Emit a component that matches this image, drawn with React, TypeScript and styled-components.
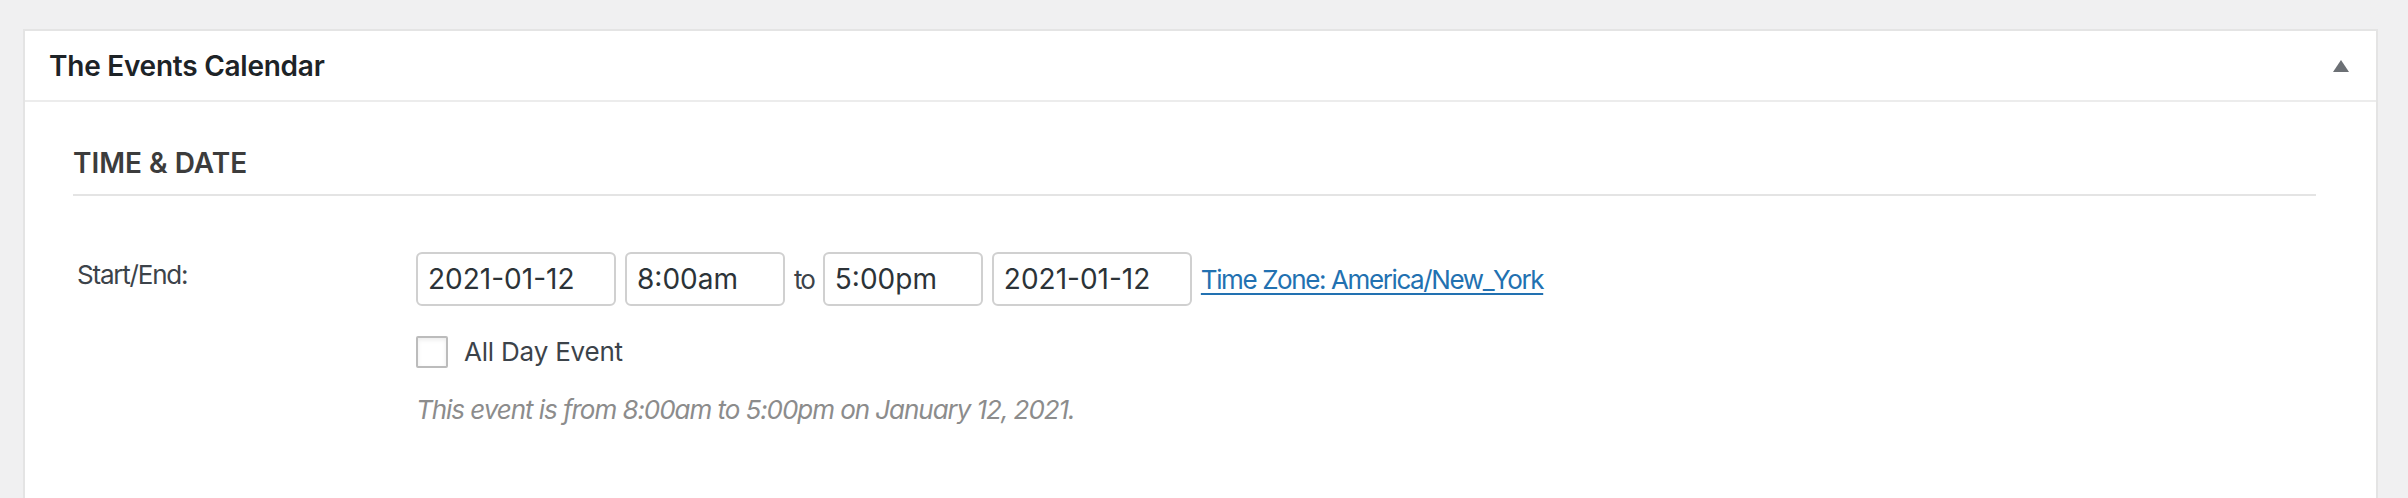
import React from "react";
import styled, { createGlobalStyle } from "styled-components";

const GlobalStyle = createGlobalStyle`
  html, body {
    margin: 0;
    padding: 0;
    background: #f0f0f1;
    font-family: Inter, "Noto Sans", "Liberation Sans", sans-serif;
    overflow: hidden;
  }
`;

const Page = styled.div`
  padding: 29px 30px 0 23px;
`;

const Postbox = styled.div`
  background: #ffffff;
  border: 2px solid #e4e4e4;
  border-bottom: none;
  min-height: 620px;
`;

const PostboxHeader = styled.div`
  height: 69px;
  display: flex;
  align-items: center;
  justify-content: space-between;
  padding: 0 27px 0 24px;
  border-bottom: 2px solid #ececec;
`;

const PostboxTitle = styled.h2`
  margin: 0;
  font-size: 28px;
  line-height: 34px;
  font-weight: 600;
  letter-spacing: -0.25px;
  color: #1d2327;
`;

const ToggleIcon = styled.svg`
  width: 16px;
  height: 12px;
  display: block;
  fill: #6c7075;
`;

const Inside = styled.div`
  padding: 44px 60px 0 48px;
`;

const SectionTitle = styled.h3`
  margin: 0;
  font-size: 28px;
  line-height: 34px;
  font-weight: 600;
  color: #3c3c3c;
  padding-bottom: 14px;
  border-bottom: 2px solid #e4e4e4;
`;

const FieldRow = styled.div`
  display: grid;
  grid-template-columns: 343px 1fr;
  margin-top: 56px;
`;

const Label = styled.div`
  padding: 5px 0 0 4px;
  font-size: 26px;
  line-height: 36px;
  letter-spacing: -1.2px;
  color: #3c434a;
`;

const Fields = styled.div`
  display: flex;
  flex-direction: column;
`;

const InputsLine = styled.div`
  display: flex;
  align-items: baseline;
  gap: 9px;
`;

const TextInput = styled.input<{ $w: number }>`
  box-sizing: border-box;
  width: ${(p) => p.$w}px;
  height: 54px;
  margin: 0;
  padding: 0 10px;
  border: 2px solid #d0d0d0;
  border-radius: 6px;
  background: #ffffff;
  font-family: inherit;
  font-size: 28px;
  color: #2c3338;
  outline: none;
`;

const Between = styled.span`
  font-size: 26px;
  letter-spacing: -2px;
  color: #3c434a;
`;

const ZoneLink = styled.a`
  font-size: 26px;
  letter-spacing: -1.4px;
  color: #2271b1;
  text-decoration: underline;
  text-decoration-thickness: 2px;
  text-underline-offset: 4px;
  cursor: pointer;
`;

const CheckLine = styled.label`
  display: flex;
  align-items: center;
  gap: 16px;
  margin-top: 28px;
  font-size: 26px;
  line-height: 36px;
  letter-spacing: -0.2px;
  color: #3c434a;
`;

const Checkbox = styled.input`
  appearance: none;
  box-sizing: border-box;
  width: 32px;
  height: 32px;
  margin: 0;
  border: 2px solid #bcbcbc;
  border-radius: 2px;
  background: #ffffff;
  box-shadow: inset 0 2px 4px rgba(0, 0, 0, 0.08);
`;

const Description = styled.p`
  margin: 22px 0 0;
  font-size: 26px;
  line-height: 36px;
  font-style: italic;
  letter-spacing: -1.05px;
  color: #8c8c8c;
`;

export default function App() {
  return (
    <>
      <GlobalStyle />
      <Page>
        <Postbox>
          <PostboxHeader>
            <PostboxTitle>The Events Calendar</PostboxTitle>
            <ToggleIcon viewBox="0 0 16 12">
              <polygon points="8,0 16,12 0,12" />
            </ToggleIcon>
          </PostboxHeader>
          <Inside>
            <SectionTitle>TIME &amp; DATE</SectionTitle>
            <FieldRow>
              <Label>Start/End:</Label>
              <Fields>
                <InputsLine>
                  <TextInput $w={200} readOnly value="2021-01-12" />
                  <TextInput $w={160} readOnly value="8:00am" />
                  <Between>to</Between>
                  <TextInput $w={160} readOnly value="5:00pm" />
                  <TextInput $w={200} readOnly value="2021-01-12" />
                  <ZoneLink>Time Zone: America/New_York</ZoneLink>
                </InputsLine>
                <CheckLine>
                  <Checkbox type="checkbox" />
                  All Day Event
                </CheckLine>
                <Description>
                  This event is from 8:00am to 5:00pm on January 12, 2021.
                </Description>
              </Fields>
            </FieldRow>
          </Inside>
        </Postbox>
      </Page>
    </>
  );
}
